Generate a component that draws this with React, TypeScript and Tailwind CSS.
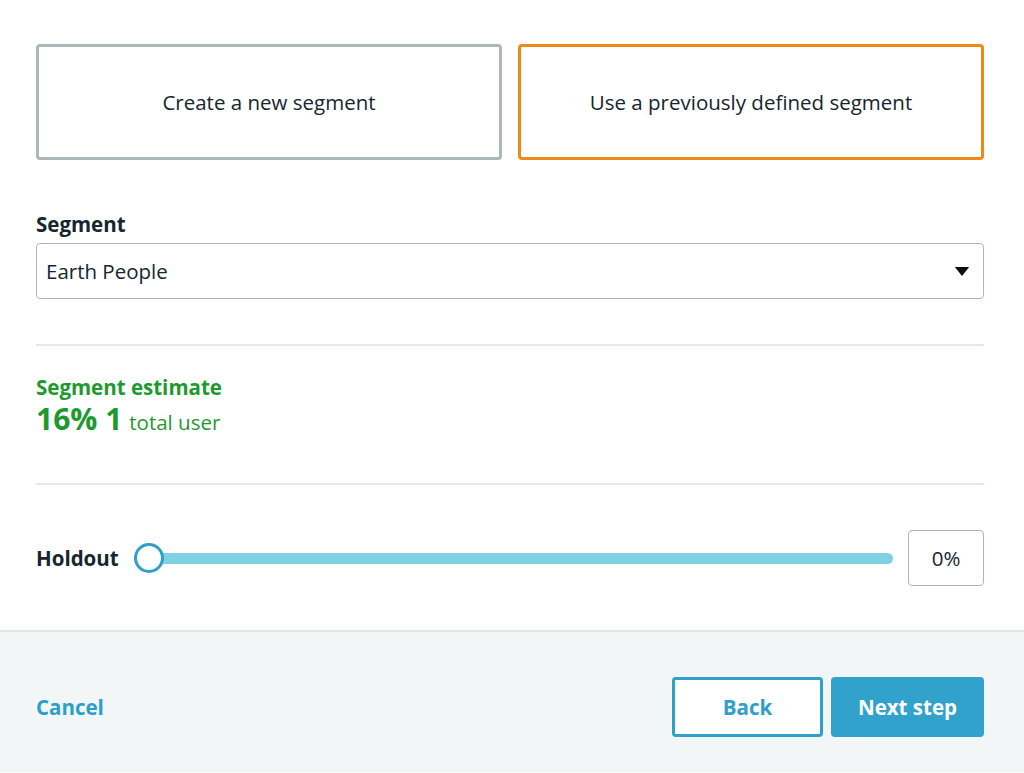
import { useState } from 'react';

const FONT = { fontFamily: '"Open Sans", "Liberation Sans", sans-serif' };

export default function App() {
  const [mode, setMode] = useState<'new' | 'existing'>('existing');

  return (
    <div className="flex h-[773px] w-[1024px] flex-col bg-white text-[#16252e]" style={FONT}>
      <div className="flex flex-1 flex-col pl-9 pr-10 pt-11">
        {/* Choix du type de segment */}
        <div className="grid grid-cols-2 gap-4">
          <button
            onClick={() => setMode('new')}
            className={`flex h-[116px] items-center justify-center rounded-[4px] border-[3px] bg-white text-[20.5px] ${mode === 'new' ? 'border-[#ec8b1a]' : 'border-[#aab8bc]'}`}
          >
            Create a new segment
          </button>
          <button
            onClick={() => setMode('existing')}
            className={`flex h-[116px] items-center justify-center rounded-[4px] border-[3px] bg-white text-[20.5px] ${mode === 'existing' ? 'border-[#ec8b1a]' : 'border-[#aab8bc]'}`}
          >
            Use a previously defined segment
          </button>
        </div>

        <div className="mt-[52px] text-[20.5px] font-bold leading-6">Segment</div>
        <div className="mt-[7px] flex h-[56px] items-center justify-between rounded-[4px] border border-[#aab8bc] pl-[9px] pr-[13px]">
          <span className="text-[20.5px]">Earth People</span>
          <svg viewBox="0 0 16 10" className="h-[9px] w-[16px]" aria-hidden="true">
            <path d="M0 0h16L8 10z" fill="#0b0f12" />
          </svg>
        </div>

        <div className="mt-[45px] h-[2px] bg-[#e3e9e9]" />

        {/* Estimation */}
        <div className="mt-[29px] text-[#1d9a2e]">
          <div className="text-[20.5px] font-bold leading-6">Segment estimate</div>
          <div className="flex items-baseline gap-[7px] leading-[40px]">
            <span className="text-[30px] font-bold">16% 1</span>
            <span className="text-[20.5px]">total user</span>
          </div>
        </div>

        <div className="mt-[41px] h-[2px] bg-[#e3e9e9]" />

        {/* Holdout */}
        <div className="mt-[45px] flex items-center">
          <span className="w-[98px] text-[20.5px] font-bold">Holdout</span>
          <div className="relative flex h-[32px] flex-1 items-center">
            <div className="h-[11px] w-full rounded-full bg-[#7fd0e3]" />
            <span className="absolute left-0 top-[1px] h-[30px] w-[30px] rounded-full border-[3px] border-[#2f9fcb] bg-white" />
          </div>
          <div className="ml-[15px] flex h-[56px] w-[76px] items-center justify-center rounded-[4px] border border-[#aab8bc] text-[20.5px]">
            0%
          </div>
        </div>
      </div>

      {/* Pied de page */}
      <div className="mb-[1px] flex h-[142px] items-center justify-between border-t-2 border-[#e0e6e6] bg-[#f3f6f7] pl-9 pr-10 pt-[10px]">
        <button className="text-[20.5px] font-bold text-[#2a9fcb]">Cancel</button>
        <div className="flex gap-2">
          <button className="h-[60px] w-[151px] rounded-[4px] border-[3px] border-[#2f9fcb] bg-white text-[20.5px] font-bold text-[#2f9fcb]">
            Back
          </button>
          <button className="h-[60px] w-[153px] rounded-[4px] bg-[#31a2cc] text-[20.5px] font-bold text-white">
            Next step
          </button>
        </div>
      </div>
    </div>
  );
}
